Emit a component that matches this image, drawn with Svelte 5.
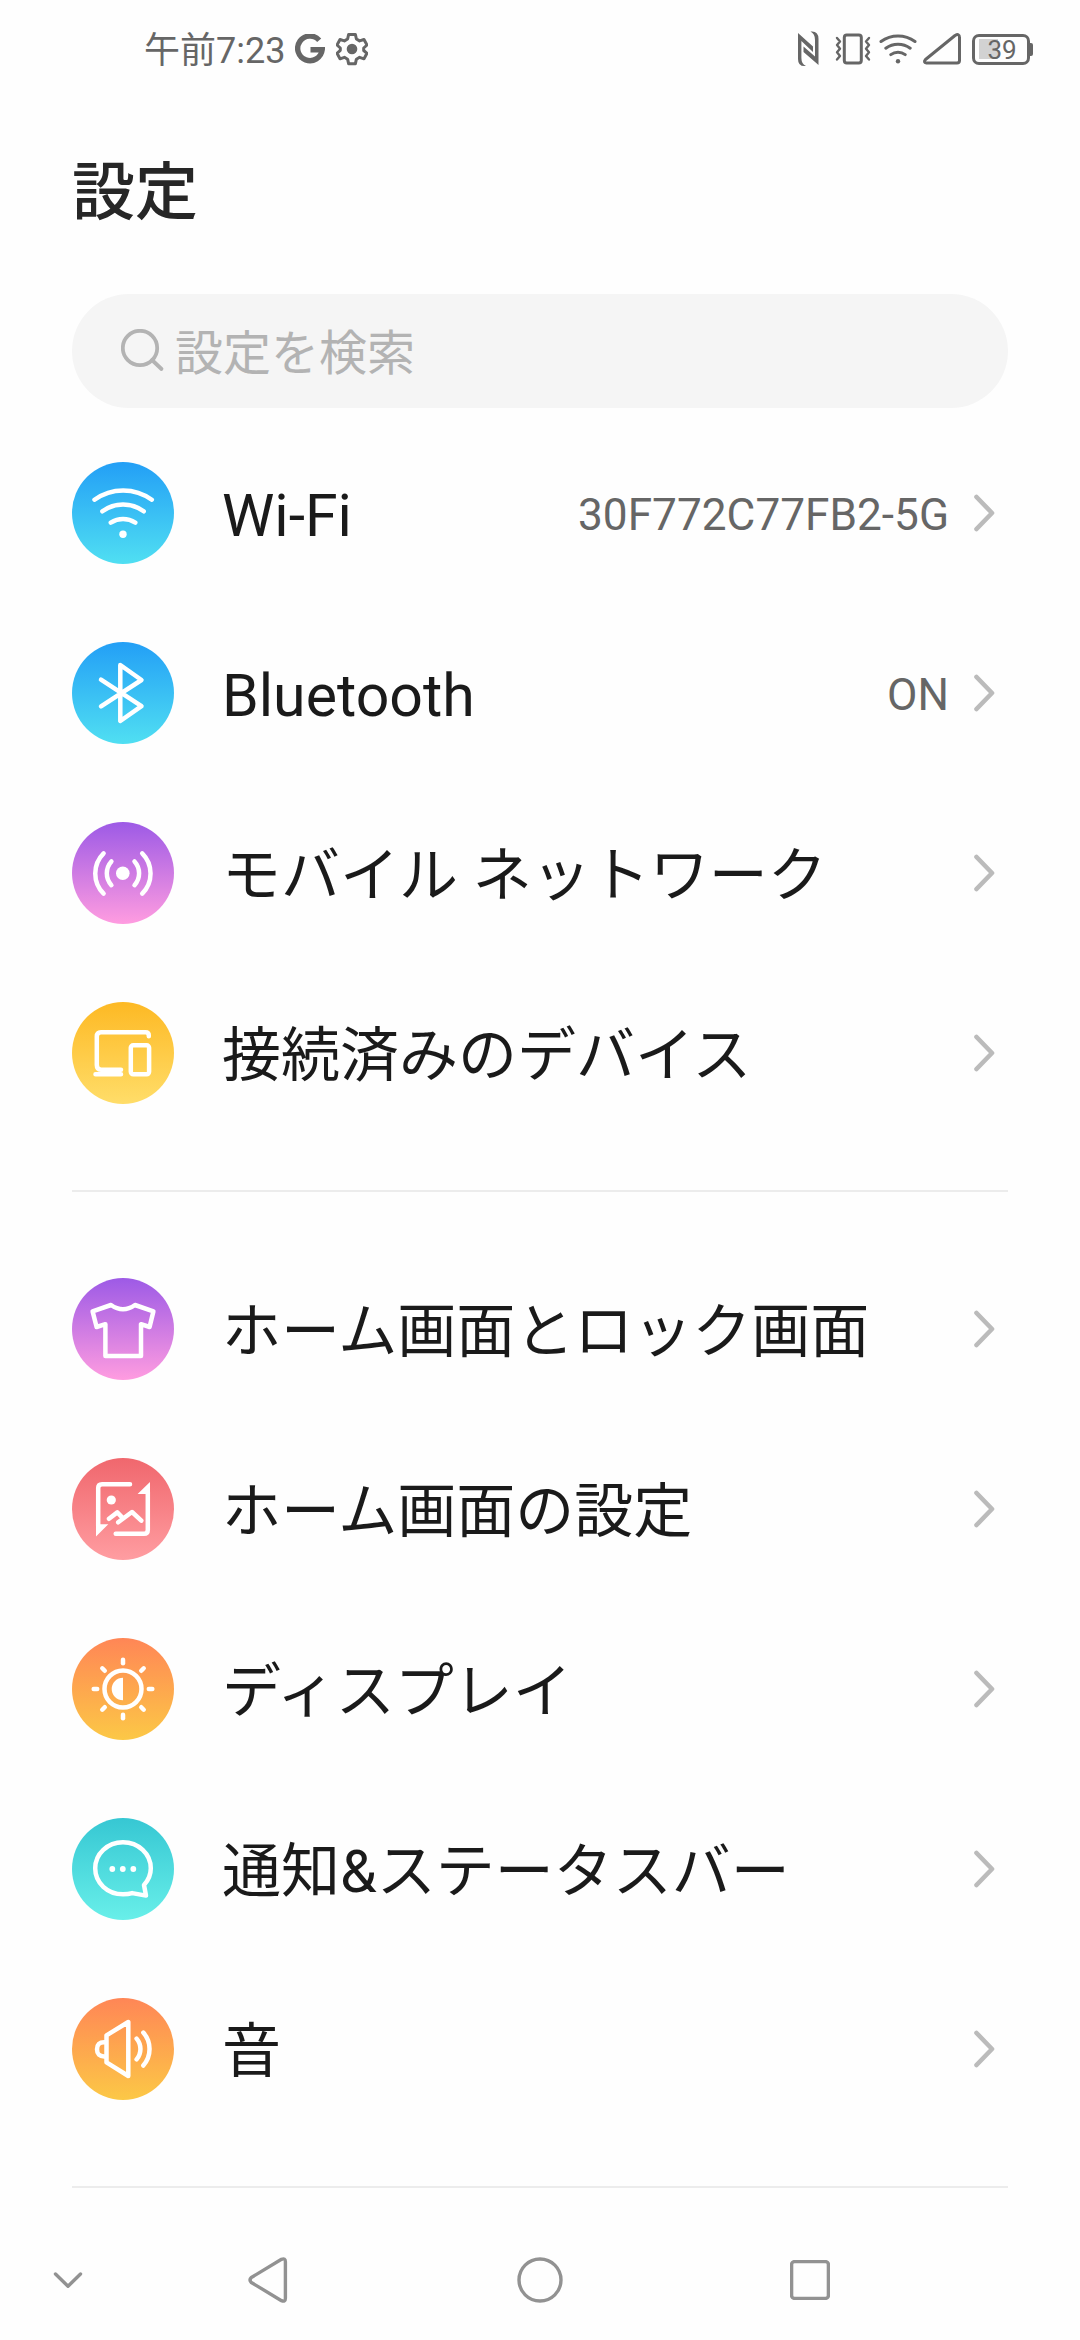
<script>
  const groups = [
    [
      { icon: 'wifi', tone: 'blue', label: 'Wi-Fi', value: '30F772C77FB2-5G' },
      { icon: 'bluetooth', tone: 'blue', label: 'Bluetooth', value: 'ON' },
      { icon: 'mobile', tone: 'purple', label: 'モバイル ネットワーク' },
      { icon: 'devices', tone: 'yellow', label: '接続済みのデバイス' }
    ],
    [
      { icon: 'shirt', tone: 'purple', label: 'ホーム画面とロック画面' },
      { icon: 'picture', tone: 'red', label: 'ホーム画面の設定' },
      { icon: 'sun', tone: 'orange', label: 'ディスプレイ' },
      { icon: 'chat', tone: 'teal', label: '通知&ステータスバー' },
      { icon: 'speaker', tone: 'orange', label: '音' }
    ]
  ];
  const rays = [0, 45, 90, 135, 180, 225, 270, 315];
</script>

{#snippet glyph(name)}
  <svg class="glyph" viewBox="0 0 102 102">
    {#if name === 'wifi'}
      <path d="M22.5 37.7A48.7 48.7 0 0 1 79.8 37.7M30.4 49.3A35 35 0 0 1 71.7 49.3M38.8 60.6A23 23 0 0 1 63.3 60.6" />
      <circle class="solid" cx="51" cy="72.3" r="3.7" />
    {:else if name === 'bluetooth'}
      <path d="M29 37.7L69.5 64.2L48.3 79V23L69.5 38L29 64.3" />
    {:else if name === 'mobile'}
      <circle class="solid" cx="50.8" cy="51.3" r="6.8" />
      <path d="M39.4 39.4A17.7 17.7 0 0 0 39.4 63.2M62.5 39.4A17.7 17.7 0 0 1 62.5 63.2M31.6 31.3A28.5 28.5 0 0 0 31.6 71.6M70.2 31.3A28.5 28.5 0 0 1 70.2 71.6" />
    {:else if name === 'devices'}
      <path d="M76.8 34.3V33.5Q76.8 30.2 73.5 30.2H29Q24.8 30.2 24.8 34.5V63Q24.8 67.6 29 67.8H49M23.5 72.3H49" />
      <rect x="58.8" y="43.3" width="18.3" height="29" rx="2.5" />
    {:else if name === 'shirt'}
      <path d="M20.6 33.4L39 27Q51 35.5 63 27L81.4 33.4L77.6 49L69 46.2V78H33.4V46.2L24.6 49Z" />
    {:else if name === 'picture'}
      <path d="M58 26.2H30Q26.2 26.2 26.2 30V68M75.8 34V72Q75.8 75.8 72 75.8H43.7M37 60.8L45.3 54.4L49.4 58.6M46.2 64.3L60 54L69.3 62.6" />
      <path class="solid" d="M24 66.3H36.3L24 78.5ZM78 24V36H65.6Z" />
      <circle class="solid" cx="39.3" cy="42" r="4.6" />
    {:else if name === 'sun'}
      <circle cx="51" cy="51" r="18.5" />
      <path class="solid" d="M51 39.7A11.3 11.3 0 0 0 51 62.3Z" />
      {#each rays as a}
        <path d="M51 21.7V25.2" transform="rotate({a} 51 51)" />
      {/each}
    {:else if name === 'chat'}
      <path d="M60.2 75.1C57.3 76 54.2 76.3 51 76.3C35.5 76.3 23.2 65 23.2 50.3C23.2 35.8 35.5 24.2 51 24.2S78.8 35.8 78.8 50.3C78.8 56.8 76.2 62.5 72 67L74 77.6Z" />
      <circle class="solid" cx="40.3" cy="51" r="2.9" />
      <circle class="solid" cx="50.8" cy="51" r="2.9" />
      <circle class="solid" cx="61.3" cy="51" r="2.9" />
    {:else}
      <path d="M56.3 24V78L34.5 64.4V37.3ZM32.5 44.2Q25 44 25 51.3Q25 58.6 32.5 58.4M64.6 40.6A16 16 0 0 1 64.6 61.4M71.3 34.6A24.8 24.8 0 0 1 71.3 67.5" />
    {/if}
  </svg>
{/snippet}

<div class="screen">
  <header class="status">
    <span class="time">午前7:23</span>
    <svg class="google" viewBox="0 0 30 30">
      <path d="M24.2 6.2A12.3 12.3 0 1 0 27.2 15.8H15.5" />
    </svg>
    <svg class="gear" viewBox="0 0 32 34">
      <path d="M12.6 2.5H19.4L20.4 7L23.6 8.9L28 7.5L31 13L27.7 16V18.5L31 21.3L28 26.8L23.6 25.3L20.4 27.2L19.4 31.7H12.6L11.6 27.2L8.4 25.3L4 26.8L1 21.3L4.3 18.3V16L1 13L4 7.5L8.4 8.9L11.6 7Z" />
      <circle cx="16" cy="17" r="5.3" />
    </svg>
    <div class="tray">
      <svg class="nfc" viewBox="0 0 22 36">
        <path class="fill" d="M0 2L15 15.5V21L3.4 10V27Q3.4 33 8 35Q0 36 0 28ZM20.5 34L5.5 21V15.5L17 25.5V9Q17 3 12.5 .6Q20.5 -.4 20.5 8Z" />
      </svg>
      <svg class="vibrate" viewBox="0 0 36 34">
        <rect x="9.3" y="3" width="17" height="28" rx="2.5" />
        <path class="thin" d="M2 6L5 9.5L2 13L5 16.8L2 20.3L5 24L2 27.5M34 6L31 9.5L34 13L31 16.8L34 20.3L31 24L34 27.5" />
      </svg>
      <svg class="signal-wifi" viewBox="0 0 38 34">
        <path d="M2 9.5A29 29 0 0 1 36 9.5M6.8 16.2A20.5 20.5 0 0 1 31.2 16.2M11.8 22.6A12 12 0 0 1 26.2 22.6" />
        <circle class="fill" cx="19" cy="29.3" r="2.2" />
      </svg>
      <svg class="cell" viewBox="0 0 40 34">
        <path d="M3.5 27.5L33 3.5Q37.5 1 37.5 5.5V28.5Q37.5 31 35 31H4.5Q1 30.5 3.5 27.5Z" />
      </svg>
      <div class="battery"><span>39</span></div>
    </div>
  </header>

  <h1>設定</h1>

  <div class="search">
    <svg viewBox="0 0 44 44">
      <circle cx="19" cy="19" r="17.2" />
      <path d="M31 31L40.5 40" />
    </svg>
    <span>設定を検索</span>
  </div>

  <main>
    {#each groups as group}
      <section>
        {#each group as item}
          <div class="row">
            <div class="badge {item.tone}">{@render glyph(item.icon)}</div>
            <span class="label">{item.label}</span>
            {#if item.value}<span class="value">{item.value}</span>{/if}
            <svg class="chevron" viewBox="0 0 22 38">
              <path d="M3.5 3L19 19L3.5 35" />
            </svg>
          </div>
        {/each}
      </section>
    {/each}
  </main>

  <nav>
    <svg class="hide" viewBox="0 0 30 18"><path d="M2.5 3L15 15.2L27.5 3" /></svg>
    <svg class="back" viewBox="0 0 40 48"><path d="M3.3 21.5L33.5 3.3Q37.4 1.8 37.4 5.8V42.2Q37.4 46.2 33.5 44.7L3.3 26.5Q.8 24 3.3 21.5Z" /></svg>
    <svg class="home" viewBox="0 0 46 46"><circle cx="23" cy="23" r="21" /></svg>
    <svg class="recent" viewBox="0 0 40 40"><rect x="1.6" y="1.6" width="36.8" height="36.8" rx="3" /></svg>
  </nav>
</div>

<style>
  :global(body) {
    background: #fefefe;
  }
  .screen {
    width: 1080px;
    height: 2340px;
    display: flex;
    flex-direction: column;
    overflow: hidden;
    background: #fefefe;
    color: #1a1a1a;
    font-family: Roboto, 'Noto Sans CJK JP', sans-serif;
  }
  svg {
    display: block;
    flex: none;
    fill: none;
    stroke-linecap: round;
    stroke-linejoin: round;
  }
  .status {
    flex: none;
    height: 98px;
    padding: 0 46px 0 144px;
    display: flex;
    align-items: center;
    color: #666;
    font-size: 36px;
  }
  .status svg {
    stroke: #666;
    stroke-width: 3;
  }
  .status .fill {
    fill: #666;
    stroke: none;
  }
  .time {
    width: 151px;
    padding-top: 4px;
    line-height: 50px;
    white-space: nowrap;
  }
  .status .google {
    width: 30px;
    height: 30px;
    stroke-width: 5.4;
    stroke-linecap: butt;
    stroke-linejoin: miter;
  }
  .gear {
    width: 32px;
    height: 34px;
    margin-left: 11px;
  }
  .gear circle {
    fill: #666;
    stroke: none;
  }
  .tray {
    margin-left: auto;
    display: flex;
    align-items: center;
  }
  .nfc {
    width: 22px;
    height: 36px;
    margin-right: 15px;
  }
  .vibrate {
    width: 36px;
    height: 34px;
    margin-right: 8px;
  }
  .vibrate .thin {
    stroke-width: 2.4;
  }
  .signal-wifi {
    width: 38px;
    height: 34px;
    margin-right: 5px;
  }
  .cell {
    width: 40px;
    height: 34px;
    margin-right: 10px;
  }
  .battery {
    position: relative;
    box-sizing: border-box;
    width: 58px;
    height: 31px;
    margin-right: 4px;
    padding: 2px 0 0 2px;
    border: 3px solid #666;
    border-radius: 7px;
    display: flex;
    align-items: center;
    justify-content: center;
    background: linear-gradient(#d2d2d2, #d2d2d2) 4px center / 19px 20px no-repeat;
    font-size: 26px;
    line-height: 26px;
  }
  .battery::after {
    content: '';
    position: absolute;
    right: -6px;
    top: 6px;
    width: 4px;
    height: 13px;
    background: #666;
    border-radius: 0 2px 2px 0;
  }
  h1 {
    box-sizing: border-box;
    flex: none;
    margin: 0;
    padding: 50px 72px 0;
    height: 196px;
    font-size: 63px;
    line-height: 90px;
    font-weight: 500;
    color: #262626;
  }
  .search {
    flex: none;
    height: 114px;
    margin: 0 72px 15px;
    padding-left: 49px;
    border-radius: 57px;
    background: #f5f5f5;
    display: flex;
    align-items: center;
    gap: 10px;
    color: #b3b3b3;
    font-size: 48px;
  }
  .search span {
    padding-bottom: 5px;
  }
  .search svg {
    width: 44px;
    height: 44px;
    stroke: #b3b3b3;
    stroke-width: 3.8;
  }
  main {
    flex: 1;
    min-height: 0;
    padding: 0 72px;
  }
  section {
    padding-bottom: 47px;
    border-bottom: 2px solid #ececec;
  }
  section + section {
    padding-top: 47px;
  }
  .row {
    height: 180px;
    display: flex;
    align-items: center;
  }
  .badge {
    flex: none;
    width: 102px;
    height: 102px;
    border-radius: 50%;
  }
  .blue {
    background: linear-gradient(#239ff6, #50dff2);
  }
  .purple {
    background: linear-gradient(#9d5ae6, #ff9ce0);
  }
  .yellow {
    background: linear-gradient(#fdb924, #ffdd69);
  }
  .red {
    background: linear-gradient(#f0676d, #ff9da1);
  }
  .orange {
    background: linear-gradient(#ff8656, #fcc846);
  }
  .teal {
    background: linear-gradient(#36c7d3, #68efe9);
  }
  .glyph {
    width: 102px;
    height: 102px;
    stroke: #fff;
    stroke-width: 4.5;
  }
  .glyph .solid {
    fill: #fff;
    stroke: none;
  }
  .label {
    margin-left: 48px;
    padding-top: 5px;
    font-size: 59px;
    line-height: 88px;
    white-space: nowrap;
  }
  .value {
    margin-left: auto;
    padding-top: 3px;
    color: #666;
    font-size: 44.2px;
    line-height: 66px;
  }
  .chevron {
    width: 22px;
    height: 38px;
    margin: 0 13px 0 auto;
    stroke: #bbb;
    stroke-width: 4.6;
  }
  .value + .chevron {
    margin-left: 24px;
  }
  nav {
    flex: none;
    height: 120px;
    padding-left: 53px;
    display: flex;
    align-items: center;
  }
  nav svg {
    stroke: #929292;
    stroke-width: 3.4;
  }
  .hide {
    width: 30px;
    height: 18px;
  }
  .back {
    width: 40px;
    height: 48px;
    margin-left: 165px;
  }
  .home {
    width: 46px;
    height: 46px;
    margin-left: 229px;
  }
  .recent {
    width: 40px;
    height: 40px;
    margin-left: 227px;
  }
</style>
